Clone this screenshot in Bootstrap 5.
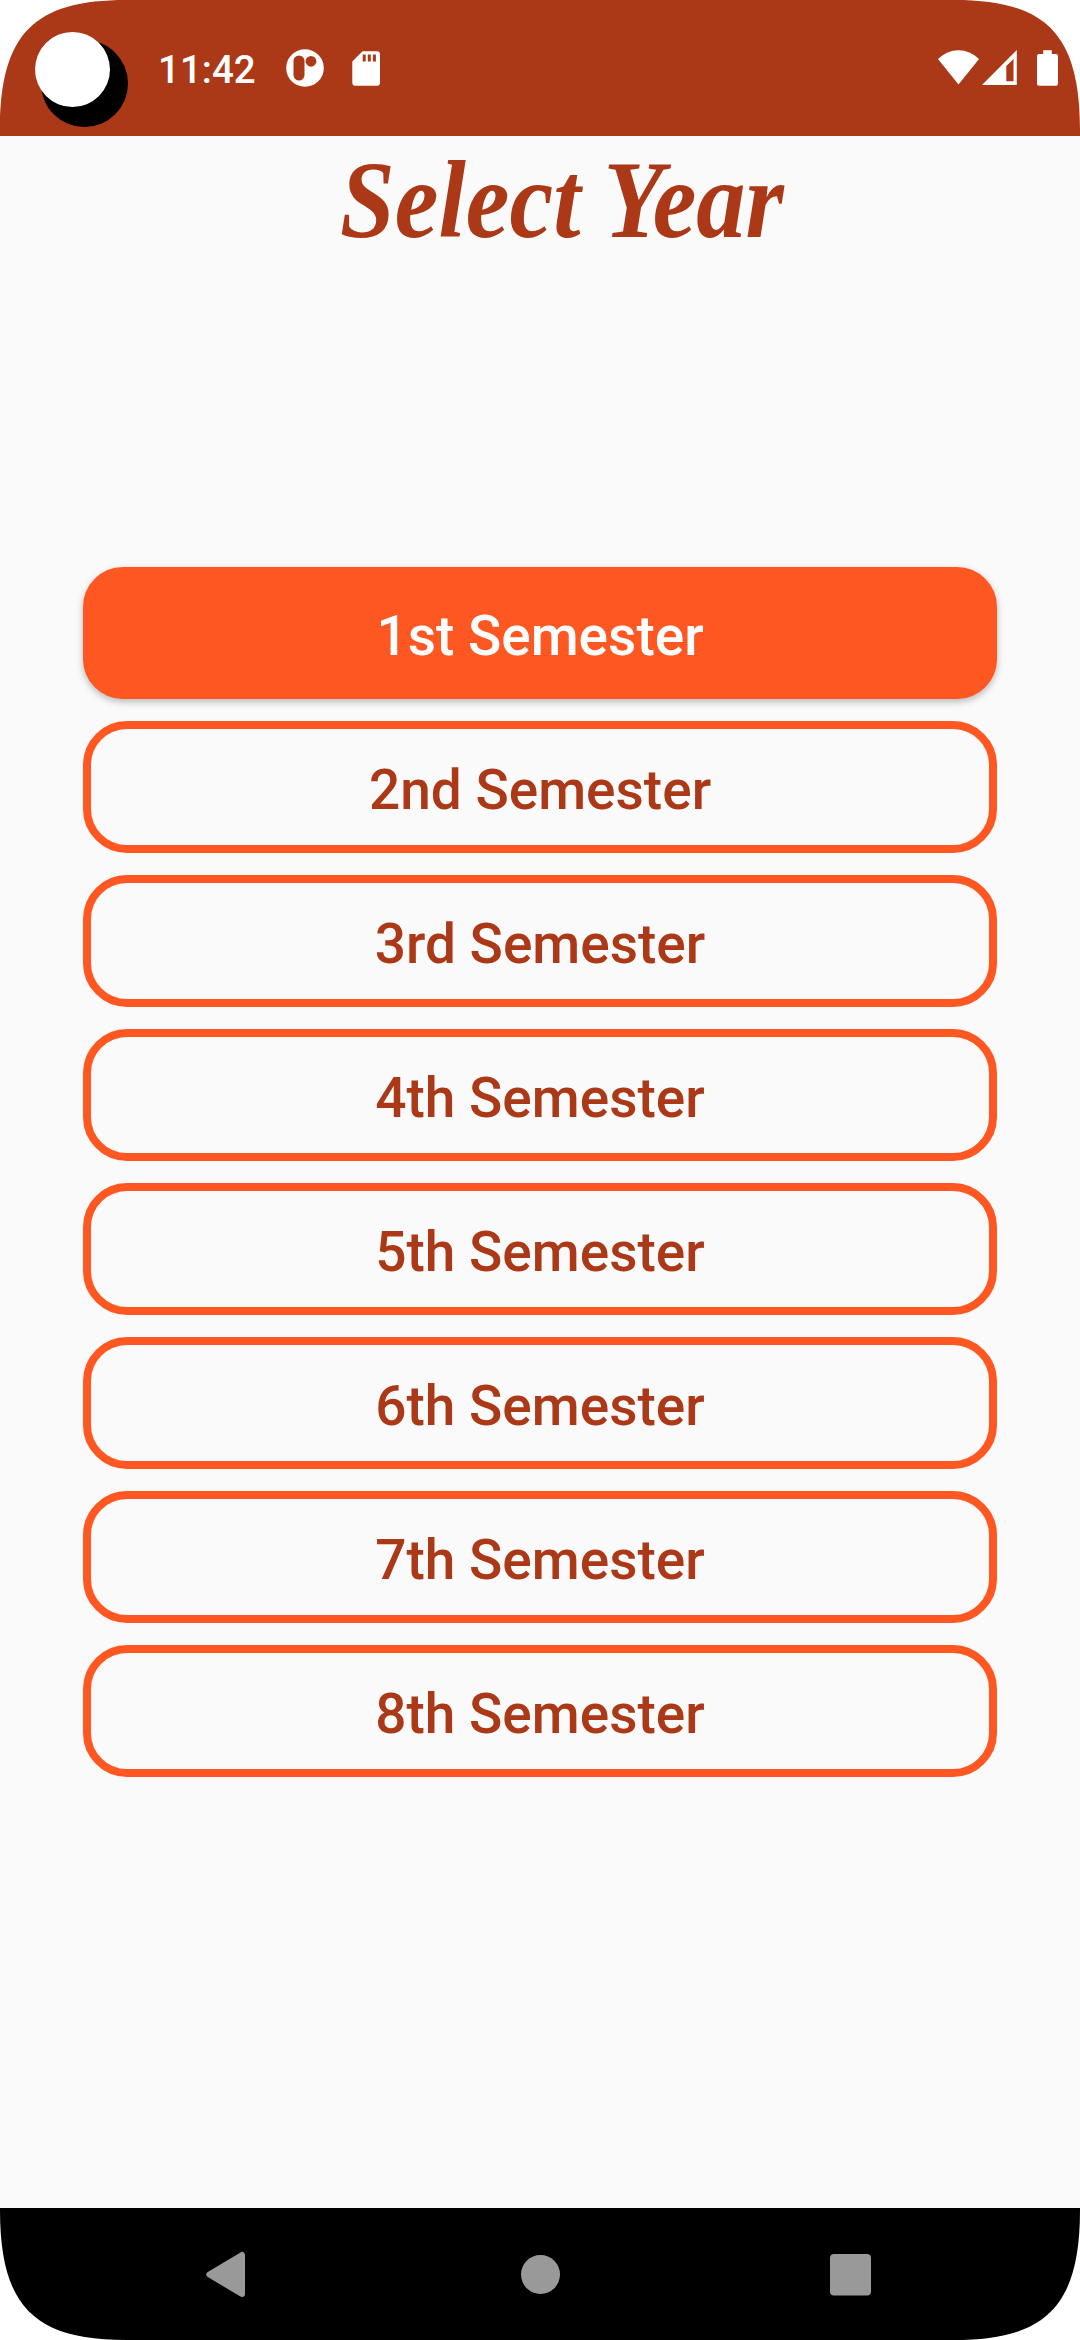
<!DOCTYPE html>
<html lang="en">
<head>
<meta charset="utf-8">
<meta name="viewport" content="width=device-width, initial-scale=1">
<title>Select Year</title>
<link href="https://cdn.jsdelivr.net/npm/bootstrap@5.3.0/dist/css/bootstrap.min.css" rel="stylesheet">
<style>
  body { background: #fff; font-family: Roboto, sans-serif; }
  .screen { width: 1080px; height: 2340px; background: #fafafa; }
  .status-bar { height: 136px; background: #ab3917; color: #fff; padding: 0 15px 0 35px; }
  .camera { width: 94px; height: 108px; margin-top: 23px; }
  .clock { font-size: 38.5px; font-weight: 500; line-height: 46px; margin: 4px 0 0 29px; width: 100px; white-space: nowrap; }
  .notif { margin-left: 28px; }
  .page-title { color: #ab3917; font: italic 700 110px/118px "Liberation Serif", serif; height: 118px; margin: 5px 0 0; padding-left: 43px; }
  .title-text { display: inline-block; transform: scaleX(.895); }
  .semesters { gap: 22px; padding: 0 83px; margin-top: 308px; }
  .btn-semester { height: 132px; font-size: 55px; font-weight: 500; line-height: 64px; padding: 5px 0 0; border: 8px solid #ff5722; border-radius: 44px; color: #ab3917; background: #fafafa; }
  .btn-semester.active, .btn-semester.active:hover { border-radius: 40px; background: #ff5722; border-color: #ff5722; color: #fff; box-shadow: 0 3px 7px rgba(0,0,0,.26); }
  .nav-keys { height: 132px; background: #000; }
  .corner { width: 126px; height: 130px; fill: #fff; }
  .flip-x { transform: scaleX(-1); }
  .flip-y { transform: scaleY(-1); }
  .flip-xy { transform: scale(-1); }
</style>
</head>
<body>
<div class="screen position-relative d-flex flex-column overflow-hidden">
  <header class="status-bar d-flex align-items-center">
    <svg class="camera align-self-start" viewBox="35 23 94 108"><circle cx="84.5" cy="83.5" r="43.5"/><circle cx="72.5" cy="69.5" r="37.5" fill="#fff"/></svg>
    <div class="clock">11:42</div>
    <svg class="notif" width="38" height="38" viewBox="0 0 38 38"><circle cx="19" cy="19" r="18.8" fill="#fff"/><rect x="7.5" y="6.5" width="11" height="25" rx="5.5" fill="#ab3917"/><circle cx="25" cy="12.3" r="5.4" fill="#ab3917"/></svg>
    <svg class="notif" width="28" height="35" viewBox="0 0 28 35"><path fill="#fff" fill-rule="evenodd" d="M10.5.3H25a3 3 0 0 1 3 3v28.4a3 3 0 0 1-3 3H3.3a3 3 0 0 1-3-3V10.5ZM10.7 3.6v7h3v-7Zm5.1 0v7h3v-7Zm5.1 0v7h3v-7Z"/></svg>
    <svg class="ms-auto" width="127" height="40" viewBox="938 48 127 40" fill="#fff"><path d="M938 59Q947 50.2 958.500 50.200Q970 50.200 979 59L958.500 84.500Z"/><path fill-rule="evenodd" d="M1016.800 50V85H982ZM1013.500 59L1006.300 66V81.300H1013.500Z"/><path d="M1043.200 50.300h8.600v3.700h4.200a2 2 0 0 1 2 2v27.800a2 2 0 0 1-2 2h-17a2 2 0 0 1-2-2V56a2 2 0 0 1 2-2h4.200Z"/></svg>
  </header>

  <main class="flex-grow-1">
    <h1 class="page-title text-center"><span class="title-text">Select Year</span></h1>
    <div class="semesters d-flex flex-column">
      <button type="button" class="btn btn-semester active">1st Semester</button>
      <button type="button" class="btn btn-semester">2nd Semester</button>
      <button type="button" class="btn btn-semester">3rd Semester</button>
      <button type="button" class="btn btn-semester">4th Semester</button>
      <button type="button" class="btn btn-semester">5th Semester</button>
      <button type="button" class="btn btn-semester">6th Semester</button>
      <button type="button" class="btn btn-semester">7th Semester</button>
      <button type="button" class="btn btn-semester">8th Semester</button>
    </div>
  </main>

  <footer class="nav-keys">
    <svg width="1080" height="132" viewBox="0 2208 1080 132" class="d-block" fill="#999"><path stroke="#999" stroke-width="6" stroke-linejoin="round" d="M209.300 2274.500L242 2255V2294Z"/><circle cx="540.500" cy="2274.500" r="19.500"/><rect x="830" y="2254" width="41" height="41.500" rx="4"/></svg>
  </footer>

  <svg class="corner position-absolute top-0 start-0" viewBox="0 0 126 130"><path d="M0 0V130C0 33 35 0 126 0Z"/></svg>
  <svg class="corner flip-x position-absolute top-0 end-0" viewBox="0 0 126 130"><path d="M0 0V130C0 33 35 0 126 0Z"/></svg>
  <svg class="corner flip-y position-absolute bottom-0 start-0" viewBox="0 0 126 130"><path d="M0 0V130C0 33 35 0 126 0Z"/></svg>
  <svg class="corner flip-xy position-absolute bottom-0 end-0" viewBox="0 0 126 130"><path d="M0 0V130C0 33 35 0 126 0Z"/></svg>
</div>
<script src="https://cdn.jsdelivr.net/npm/bootstrap@5.3.0/dist/js/bootstrap.bundle.min.js"></script>
</body>
</html>
